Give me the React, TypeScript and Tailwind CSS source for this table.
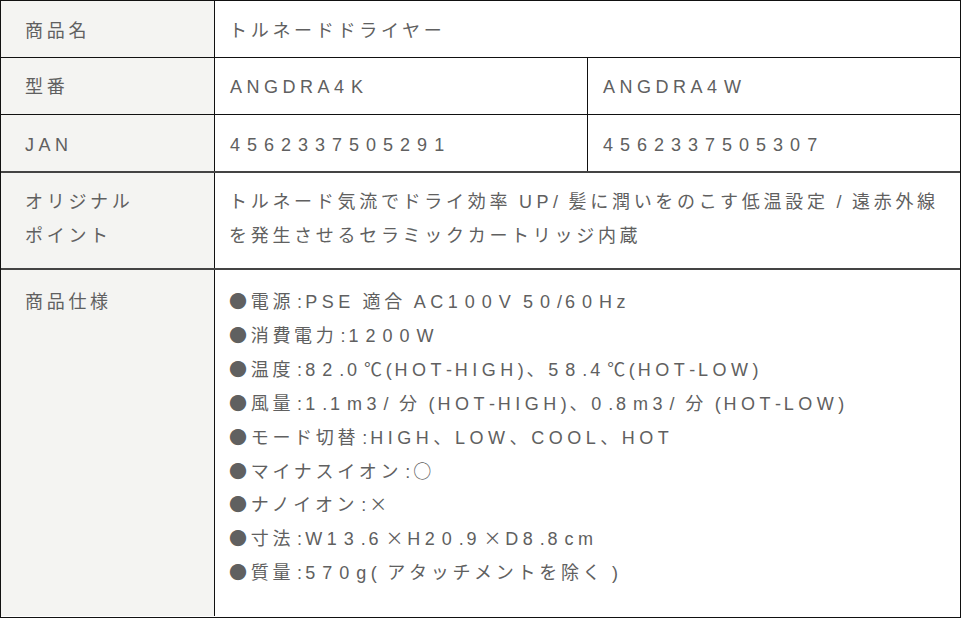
import React from "react";

type Kind = "d" | "l" | "p" | "c" | "k";

function kindOf(ch: string): Kind {
  if (/[0-9]/.test(ch)) return "d";
  if (/[A-Za-z]/.test(ch)) return "l";
  if (ch === ":") return "k";
  if (ch === "×") return "c";
  if (/[\u0000-\u024F]/.test(ch)) return "p";
  return "c";
}

const cls: Record<Kind, string> = {
  d: "leading-[20px] font-['Liberation_Sans',sans-serif] tracking-[7px]",
  l: "leading-[20px] font-['Liberation_Sans',sans-serif] tracking-[4.5px]",
  p: "leading-[20px] font-['Liberation_Sans',sans-serif] tracking-[2.8px]",
  k: "leading-[20px] font-['Liberation_Sans',sans-serif] tracking-[3px] pl-[3px]",
  c: "leading-[20px] font-['Noto_Sans_CJK_JP',sans-serif] tracking-[3.7px]",
};

function T({ text }: { text: string }) {
  const runs: { k: Kind; s: string }[] = [];
  for (const ch of Array.from(text)) {
    const k = kindOf(ch);
    const last = runs[runs.length - 1];
    if (last && last.k === k) last.s += ch;
    else runs.push({ k, s: ch });
  }
  return (
    <>
      {runs.map((r, i) => (
        <span key={i} className={cls[r.k]}>
          {r.s}
        </span>
      ))}
    </>
  );
}

const specs = [
  "●電源:PSE 適合 AC100V 50/60Hz",
  "●消費電力:1200W",
  "●温度:82.0℃(HOT-HIGH)、58.4℃(HOT-LOW)",
  "●風量:1.1m3/ 分 (HOT-HIGH)、0.8m3/ 分 (HOT-LOW)",
  "●モード切替:HIGH、LOW、COOL、HOT",
  "●マイナスイオン:○",
  "●ナノイオン:×",
  "●寸法:W13.6×H20.9×D8.8cm",
  "●質量:570g( アタッチメントを除く )",
];

const label =
  "w-[214px] shrink-0 bg-[#f4f4f2] border-r border-[#111] pl-[24px]";

export default function App() {
  return (
    <div className="w-[961px] h-[618px] bg-white box-border border border-[#111] text-[18px] leading-[34px] text-[#606060] font-['Liberation_Sans','Noto_Sans_CJK_JP',sans-serif] whitespace-nowrap overflow-hidden">
      {/* Row 1 */}
      <div className="flex h-[57px] border-b border-[#111]">
        <div className={`${label} pt-[13px]`}>
          <T text="商品名" />
        </div>
        <div className="flex-1 pl-[14px] pt-[13px]">
          <T text="トルネードドライヤー" />
        </div>
      </div>
      {/* Row 2 */}
      <div className="flex h-[57px] border-b border-[#111]">
        <div className={`${label} pt-[12px]`}>
          <T text="型番" />
        </div>
        <div className="w-[373px] shrink-0 border-r border-[#111] pl-[15px] pt-[12px]">
          <T text="ANGDRA4K" />
        </div>
        <div className="flex-1 pl-[15px] pt-[12px]">
          <T text="ANGDRA4W" />
        </div>
      </div>
      {/* Row 3 */}
      <div className="flex h-[58px] border-b-2 border-[#444]">
        <div className={`${label} pt-[13px]`}>
          <T text="JAN" />
        </div>
        <div className="w-[373px] shrink-0 border-r border-[#111] pl-[15px] pt-[13px]">
          <T text="4562337505291" />
        </div>
        <div className="flex-1 pl-[15px] pt-[13px]">
          <T text="4562337505307" />
        </div>
      </div>
      {/* Row 4 */}
      <div className="flex h-[97px] border-b-2 border-[#444]">
        <div className={`${label} pt-[12px]`}>
          <div>
            <T text="オリジナル" />
          </div>
          <div>
            <T text="ポイント" />
          </div>
        </div>
        <div className="flex-1 pl-[14px] pt-[12px]">
          <div>
            <T text="トルネード気流でドライ効率 UP/ 髪に潤いをのこす低温設定 / 遠赤外線" />
          </div>
          <div>
            <T text="を発生させるセラミックカートリッジ内蔵" />
          </div>
        </div>
      </div>
      {/* Row 5 */}
      <div className="flex h-[346px]">
        <div className={`${label} pt-[16px] leading-[33.9px]`}>
          <T text="商品仕様" />
        </div>
        <div className="flex-1 pl-[14px] pt-[16px] flex flex-col leading-[33.9px]">
          {specs.map((s, i) => (
            <div key={i}>
              <T text={s} />
            </div>
          ))}
        </div>
      </div>
    </div>
  );
}
